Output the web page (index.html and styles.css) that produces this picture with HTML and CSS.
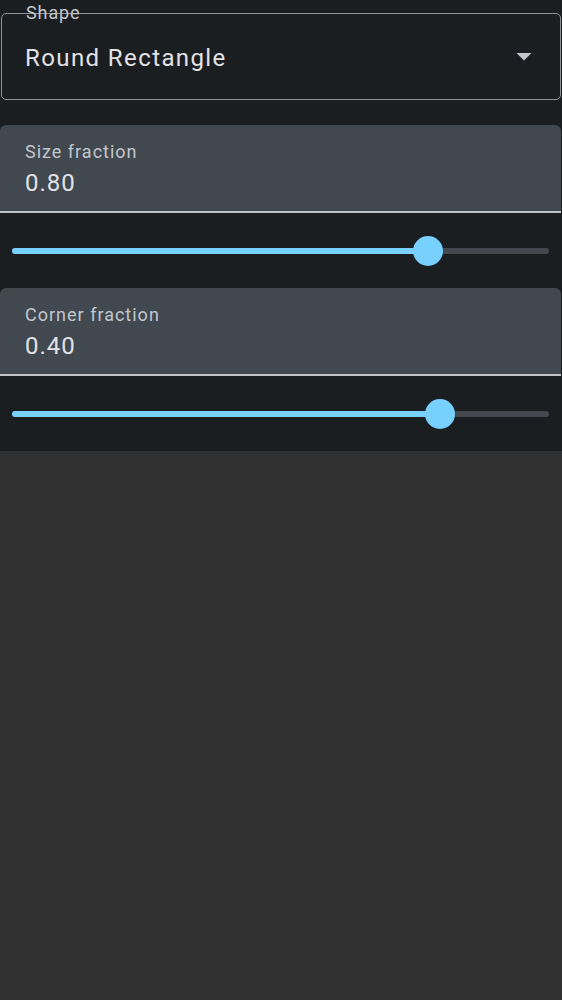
FILE: index.html
```html
<!DOCTYPE html>
<html>
<head>
<meta charset="utf-8">
<link rel="stylesheet" href="styles.css">
</head>
<body>
<div class="panel">
  <div class="select">
    <span class="select-label">Shape</span>
    <span class="select-value">Round Rectangle</span>
    <svg class="arrow" width="16" height="8" viewBox="0 0 16 8"><polygon points="0.5,0 15.5,0 8,7.5" fill="#c4c7cc"/></svg>
  </div>

  <div class="field">
    <div class="field-label">Size fraction</div>
    <div class="field-value">0.80</div>
  </div>
  <div class="slider">
    <div class="track">
      <div class="active" style="width:77.5%"></div>
      <div class="thumb" style="left:77.5%"></div>
    </div>
  </div>

  <div class="field">
    <div class="field-label">Corner fraction</div>
    <div class="field-value">0.40</div>
  </div>
  <div class="slider">
    <div class="track">
      <div class="active" style="width:79.7%"></div>
      <div class="thumb" style="left:79.7%"></div>
    </div>
  </div>
</div>
</body>
</html>
```

FILE: styles.css
```css
html, body {
  margin: 0;
  padding: 0;
  background: #303030;
  font-family: Roboto, "Noto Sans", sans-serif;
}

.panel {
  background: #1b1e21;
  padding-top: 13px;
  display: flex;
  flex-direction: column;
}

.select {
  position: relative;
  margin: 0 1px 25px 1px;
  height: 87px;
  box-sizing: border-box;
  border: 1px solid #8e9296;
  border-radius: 5px;
  display: flex;
  align-items: center;
  justify-content: space-between;
  padding: 0 28px 0 23px;
}

.select-label {
  position: absolute;
  left: 24px;
  top: -10px;
  font-size: 18px;
  line-height: 18px;
  letter-spacing: 0.9px;
  color: #c4c7cc;
}

.select-value {
  font-size: 24px;
  line-height: 28px;
  margin-top: 2px;
  letter-spacing: 1.4px;
  color: #e2e2e6;
}

.arrow {
  display: block;
}

.field {
  background: #41484f;
  border-radius: 6px 6px 0 0;
  border-bottom: 2px solid #bfc3c7;
  height: 88px;
  box-sizing: border-box;
  padding: 15px 25px 0 25px;
  margin-right: 1px;
}

.field-label {
  font-size: 18px;
  line-height: 24px;
  letter-spacing: 1px;
  color: #c2c7ce;
}

.field-value {
  font-size: 24px;
  line-height: 32px;
  margin-top: 3px;
  letter-spacing: 1px;
  color: #e2e2e6;
}

.slider {
  height: 75px;
  display: flex;
  align-items: center;
  padding: 0 13px 0 12px;
}

.track {
  position: relative;
  flex: 1;
  height: 6px;
  border-radius: 3px;
  background: #45494f;
}

.active {
  height: 6px;
  border-radius: 3px;
  background: #78d0ff;
}

.thumb {
  position: absolute;
  top: 50%;
  width: 30px;
  height: 30px;
  margin: -15px 0 0 -15px;
  border-radius: 50%;
  background: #78d0ff;
}
```
